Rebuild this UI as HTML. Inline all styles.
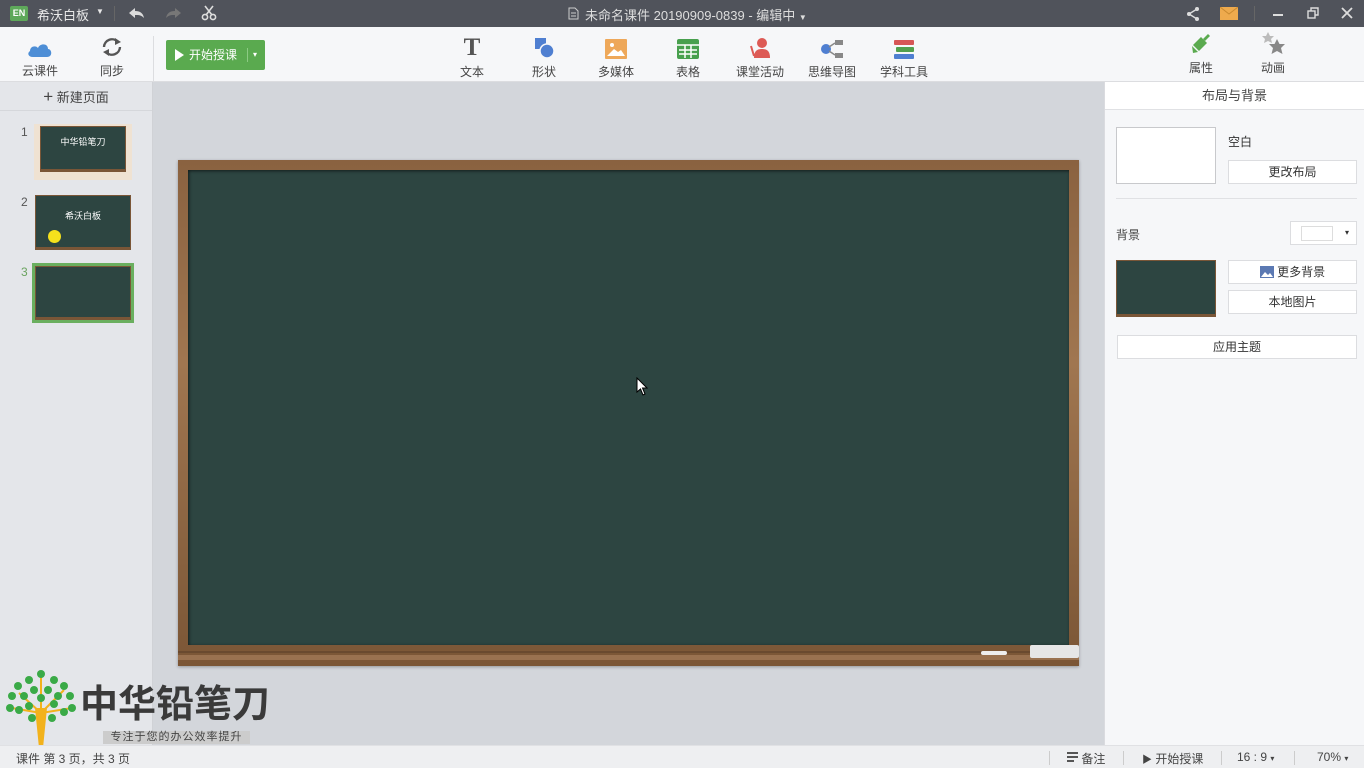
<!DOCTYPE html>
<html><head><meta charset="utf-8"><style>
*{margin:0;padding:0;box-sizing:border-box}
body{width:1364px;height:768px;overflow:hidden;position:relative;font-family:"Liberation Sans","Noto Sans CJK SC",sans-serif;font-size:12px;color:#333;background:#d3d6db}
.abs{position:absolute}
#top{left:0;top:0;width:1364px;height:27px;background:#50535b;color:#e8e8e8}
#tool{left:0;top:27px;width:1364px;height:55px;background:#f6f7f9;border-bottom:1px solid #dcdde0}
.tb{position:absolute;top:36px;width:60px;text-align:center;font-size:12px;color:#444}
.tb .ic{height:22px;margin:0 auto 4px;display:flex;justify-content:center;align-items:flex-end}
#left{left:0;top:82px;width:153px;height:663px;background:#e4e6ea;border-right:1px solid #d0d2d6}
#right{left:1104px;top:82px;width:260px;height:663px;background:#f6f7f9;border-left:1px solid #dadbdf}
.btn{position:absolute;background:#fff;border:1px solid #dcdde0;text-align:center;font-size:12px;color:#333;line-height:22px;height:24px}
#status{left:0;top:745px;width:1364px;height:23px;background:#eeeff1;border-top:1px solid #e0e1e4;font-size:12px;color:#444}
.thumb{position:absolute;background:#2d4541;border:2px solid #7a5637;border-width:1px 1px 3px 1px}
</style></head><body>
<div id="top" class="abs">
  <div class="abs" style="left:10px;top:6px;width:18px;height:15px;background:#5ea85a;color:#fff;font-size:9px;font-weight:bold;line-height:15px;text-align:center;border-radius:2px">EN</div>
  <div class="abs" style="left:37px;top:5px;font-size:13px">希沃白板</div>
  <div class="abs" style="left:96px;top:7px;font-size:8px">▼</div>
  <div class="abs" style="left:114px;top:6px;width:1px;height:15px;background:#666"></div>
  <svg class="abs" style="left:128px;top:6px" width="18" height="14"><path d="M1 7 L7 2 V5 C12 5 15 7 16 12 C13 9 11 9 7 9 V12 Z" fill="#dcdcdc"/></svg>
  <svg class="abs" style="left:164px;top:6px" width="18" height="14"><path d="M17 7 L11 2 V5 C6 5 3 7 2 12 C5 9 7 9 11 9 V12 Z" fill="#777"/></svg>
  <svg class="abs" style="left:201px;top:5px" width="16" height="16"><circle cx="4" cy="12" r="2.6" fill="none" stroke="#ddd" stroke-width="1.6"/><circle cx="12" cy="12" r="2.6" fill="none" stroke="#ddd" stroke-width="1.6"/><path d="M5 10 L12 1 M11 10 L4 1" stroke="#ddd" stroke-width="1.6"/></svg>
  <svg class="abs" style="left:568px;top:7px" width="11" height="13"><path d="M1 1 H7 L10 4 V12 H1 Z M3 6 H8 M3 9 H8" fill="none" stroke="#ccc"/></svg>
  <div class="abs" style="left:585px;top:5px;font-size:13px;color:#ddd">未命名课件 20190909-0839 - 编辑中 <span style="font-size:8px">▼</span></div>
  <svg class="abs" style="left:1185px;top:6px" width="16" height="16"><circle cx="12" cy="3" r="2" fill="#ddd"/><circle cx="4" cy="8" r="2" fill="#ddd"/><circle cx="12" cy="13" r="2" fill="#ddd"/><path d="M12 3 L4 8 L12 13" stroke="#ddd" stroke-width="1.4" fill="none"/></svg>
  <svg class="abs" style="left:1220px;top:7px" width="18" height="13"><rect width="18" height="13" fill="#eeaa4d"/><path d="M0 0 L9 7 L18 0" fill="none" stroke="#c98a30"/></svg>
  <div class="abs" style="left:1254px;top:6px;width:1px;height:15px;background:#666"></div>
  <div class="abs" style="left:1273px;top:14px;width:10px;height:2px;background:#ddd"></div>
  <svg class="abs" style="left:1307px;top:7px" width="13" height="12"><rect x="1" y="4" width="7" height="7" fill="none" stroke="#ddd" stroke-width="1.4"/><path d="M4 4 V1 H11 V8 H8" fill="none" stroke="#ddd" stroke-width="1.4"/></svg>
  <svg class="abs" style="left:1341px;top:7px" width="12" height="12"><path d="M1 1 L11 11 M11 1 L1 11" stroke="#ddd" stroke-width="1.8"/></svg>
</div>
<div id="tool" class="abs"></div>
<div class="tb" style="left:10px;top:36px"><div class="ic"><svg width="26" height="18"><path d="M6 17 C1 17 0 13 3 11 C3 6 9 5 11 8 C13 3 21 3 21 9 C25 9 26 17 20 17 Z" fill="#4d8ed6"/></svg></div>云课件</div>
<div class="tb" style="left:82px;top:36px"><div class="ic"><svg width="24" height="22"><path d="M4 11 A8 8 0 0 1 18 6" fill="none" stroke="#555" stroke-width="2.4"/><path d="M20 11 A8 8 0 0 1 6 16" fill="none" stroke="#555" stroke-width="2.4"/><path d="M15 2 L21 6 L15 9 Z M9 13 L3 16 L9 20 Z" fill="#555"/></svg></div>同步</div>
<div class="abs" style="left:153px;top:36px;width:1px;height:46px;background:#dcdde0"></div>
<div class="abs" style="left:166px;top:40px;width:99px;height:30px;background:#5aaa4f;border-radius:2px;color:#fff;font-size:12px;line-height:30px">
  <span style="position:absolute;left:9px;top:9px;width:0;height:0;border-left:9px solid #fff;border-top:6px solid transparent;border-bottom:6px solid transparent"></span>
  <span style="position:absolute;left:23px">开始授课</span>
  <span style="position:absolute;left:81px;top:8px;width:1px;height:14px;background:#8ccb83"></span>
  <span style="position:absolute;left:87px;top:0;font-size:8px">▾</span>
</div>
<div class="tb" style="left:442px;top:37px"><div class="ic"><span style="font-family:'Liberation Serif',serif;font-weight:bold;font-size:25px;color:#555;line-height:22px">T</span></div>文本</div>
<div class="tb" style="left:514px;top:37px"><div class="ic"><svg width="22" height="22"><rect x="2" y="1" width="11" height="11" fill="#4f7fd1"/><circle cx="14" cy="14" r="7" fill="#4f7fd1" stroke="#f6f7f9" stroke-width="1.5"/></svg></div>形状</div>
<div class="tb" style="left:586px;top:37px"><div class="ic"><svg width="22" height="20"><rect x="0" y="0" width="22" height="20" rx="1" fill="#eea85a"/><circle cx="7" cy="6" r="2" fill="#fff"/><path d="M2 17 L9 10 L13 13 L16 11 L20 17 Z" fill="#fff"/></svg></div>多媒体</div>
<div class="tb" style="left:658px;top:37px"><div class="ic"><svg width="22" height="20"><rect width="22" height="20" rx="2" fill="#48a04e"/><path d="M0 6 H22 M2 11 H20 M2 15 H20 M8 6 V19 M14 6 V19" stroke="#fff" stroke-width="1.5"/></svg></div>表格</div>
<div class="tb" style="left:730px;top:37px"><div class="ic"><svg width="22" height="22"><circle cx="13" cy="6" r="5" fill="#dd5a55"/><path d="M5 21 C5 14 8 12 13 12 C18 12 21 14 21 21 Z" fill="#dd5a55"/><path d="M2 9 L5 19" stroke="#dd5a55" stroke-width="2"/></svg></div>课堂活动</div>
<div class="tb" style="left:802px;top:37px"><div class="ic"><svg width="24" height="20"><circle cx="6" cy="10" r="5" fill="#4f7fd1"/><rect x="15" y="1" width="8" height="5" fill="#888"/><rect x="15" y="14" width="8" height="5" fill="#888"/><path d="M9 8 L15 4 M9 12 L15 16" stroke="#888" stroke-width="1.5"/></svg></div>思维导图</div>
<div class="tb" style="left:874px;top:37px"><div class="ic"><svg width="22" height="20"><rect x="1" y="1" width="20" height="5" rx="1" fill="#d65656"/><rect x="3" y="8" width="18" height="5" rx="1" fill="#52a04e"/><rect x="1" y="15" width="20" height="5" rx="1" fill="#4f7fd1"/></svg></div>学科工具</div>
<div class="tb" style="left:1171px;top:33px"><div class="ic"><svg width="24" height="24"><path d="M4 14 L12 6 L18 12 L10 20 Z" fill="#5aaa4f"/><path d="M14 8 L19 3 L21 5 L16 10 Z" fill="#5aaa4f"/><path d="M3 15 L9 21 L4 22 Z" fill="#5aaa4f"/></svg></div>属性</div>
<div class="tb" style="left:1243px;top:33px"><div class="ic"><svg width="26" height="24"><path d="M8 1 L10 5 L14 5 L11 8 L12 12 L8 10 L4 12 L5 8 L2 5 L6 5 Z" fill="#bbb"/><path d="M17 8 L19.5 13 L25 13 L21 17 L22.5 23 L17 20 L11.5 23 L13 17 L9 13 L14.5 13 Z" fill="#888"/></svg></div>动画</div>

<div id="left" class="abs">
  <div class="abs" style="left:0;top:0;width:152px;height:29px;border-bottom:1px solid #d5d7db;text-align:center;line-height:29px;font-size:13px;color:#444"><b style="font-size:17px;font-weight:normal">+</b> 新建页面</div>
  <div class="abs" style="left:21px;top:43px;color:#555">1</div>
  <div class="abs" style="left:34px;top:42px;width:98px;height:56px;background:#efe2d2"></div>
  <div class="thumb" style="left:40px;top:44px;width:86px;height:46px;color:#fff;font-size:9px;text-align:center;line-height:30px">中华铅笔刀</div>
  <div class="abs" style="left:21px;top:113px;color:#555">2</div>
  <div class="thumb" style="left:35px;top:113px;width:96px;height:55px;color:#fff;font-size:9px;text-align:center;line-height:40px">希沃白板</div>
  <div class="abs" style="left:48px;top:148px;width:13px;height:13px;border-radius:50%;background:#f5e11c"></div>
  <div class="abs" style="left:21px;top:183px;color:#6aa35f">3</div>
  <div class="abs" style="left:32px;top:181px;width:102px;height:60px;background:#6aaf5f"></div>
  <div class="thumb" style="left:35px;top:184px;width:96px;height:54px"></div>
</div>

<!-- chalkboard -->
<div class="abs" style="left:178px;top:160px;width:901px;height:506px;background:linear-gradient(#8a6240,#a07650 40%,#7b5636);box-shadow:0 1px 3px rgba(0,0,0,.3)"></div>
<div class="abs" style="left:188px;top:170px;width:881px;height:475px;background:#2d4541;box-shadow:inset 1px 1px 3px rgba(0,0,0,.6)"></div>
<div class="abs" style="left:178px;top:651px;width:901px;height:2px;background:#6a4a2f"></div>
<div class="abs" style="left:178px;top:655px;width:901px;height:5px;background:#9a7250"></div>
<div class="abs" style="left:1030px;top:645px;width:49px;height:13px;background:#e6e6e6;border-radius:2px"></div>
<div class="abs" style="left:981px;top:651px;width:26px;height:4px;background:#eee;border-radius:2px"></div>
<svg class="abs" style="left:636px;top:377px" width="12" height="19"><path d="M1 1 V15 L4.5 12 L7 18 L9 17 L6.5 11 L11 11 Z" fill="#fff" stroke="#000"/></svg>

<div id="right" class="abs">
  <div class="abs" style="left:0;top:0;width:259px;height:28px;background:#fff;border-bottom:1px solid #e0e1e4;text-align:center;line-height:28px;font-size:13px;color:#444">布局与背景</div>
  <div class="abs" style="left:11px;top:45px;width:100px;height:57px;background:#fff;border:1px solid #c8c9cc"></div>
  <div class="abs" style="left:123px;top:51px;font-size:12px">空白</div>
  <div class="btn" style="left:123px;top:78px;width:129px">更改布局</div>
  <div class="abs" style="left:11px;top:116px;width:241px;height:1px;background:#e0e1e4"></div>
  <div class="abs" style="left:11px;top:144px;font-size:12px;color:#444">背景</div>
  <div class="btn" style="left:185px;top:139px;width:67px;height:24px"><span style="position:absolute;left:10px;top:4px;width:32px;height:15px;border:1px solid #ddd"></span><span style="position:absolute;right:7px;top:0;font-size:8px">▾</span></div>
  <div class="abs" style="left:11px;top:178px;width:100px;height:57px;background:#2d4541;border:1px solid #7a5637;border-bottom-width:3px"></div>
  <div class="btn" style="left:123px;top:178px;width:129px"><svg style="vertical-align:-2px" width="14" height="12"><rect width="14" height="12" fill="#5b79b3"/><path d="M1 11 L5 6 L8 9 L10 7 L13 11 Z" fill="#fff"/></svg> 更多背景</div>
  <div class="btn" style="left:123px;top:208px;width:129px">本地图片</div>
  <div class="btn" style="left:12px;top:253px;width:240px">应用主题</div>
</div>

<!-- watermark -->
<svg class="abs" style="left:4px;top:668px" width="76" height="84">
  <path d="M35 80 L31 40 H43 L39 80 Z" fill="#f2b21c"/>
  <path d="M37 45 L15 25 M37 45 L60 22 M37 42 L37 8 M37 45 L8 40 M37 45 L68 40" stroke="#f2b21c" stroke-width="2"/>
  <g fill="#3aaa47">
    <circle cx="37" cy="6" r="4"/><circle cx="25" cy="12" r="4"/><circle cx="50" cy="12" r="4"/><circle cx="14" cy="18" r="4"/><circle cx="60" cy="18" r="4"/><circle cx="8" cy="28" r="4"/><circle cx="66" cy="28" r="4"/><circle cx="20" cy="28" r="4"/><circle cx="54" cy="28" r="4"/><circle cx="6" cy="40" r="4"/><circle cx="68" cy="40" r="4"/><circle cx="30" cy="22" r="4"/><circle cx="44" cy="22" r="4"/><circle cx="15" cy="42" r="4"/><circle cx="60" cy="44" r="4"/><circle cx="25" cy="38" r="4"/><circle cx="50" cy="36" r="4"/><circle cx="37" cy="30" r="4"/><circle cx="28" cy="50" r="4"/><circle cx="48" cy="50" r="4"/>
  </g>
</svg>
<div class="abs" style="left:80px;top:683px;font-size:38px;font-weight:bold;color:#3a3a3a;line-height:44px">中华铅笔刀</div>
<div class="abs" style="left:103px;top:731px;width:147px;height:13px;background:#ccc;font-size:11px;color:#444;line-height:13px;letter-spacing:1px;text-align:center">专注于您的办公效率提升</div>

<div id="status" class="abs">
  <div class="abs" style="left:16px;top:4px">课件 第 3 页，共 3 页</div>
  <div class="abs" style="left:1049px;top:5px;width:1px;height:14px;background:#ccc"></div>
  <div class="abs" style="left:1067px;top:4px"><span style="display:inline-block;width:11px;vertical-align:1px"><span style="display:block;height:2px;background:#555;margin-bottom:2px"></span><span style="display:block;height:2px;background:#555;margin-bottom:2px"></span><span style="display:block;height:2px;width:7px;background:#555"></span></span> 备注</div>
  <div class="abs" style="left:1123px;top:5px;width:1px;height:14px;background:#ccc"></div>
  <div class="abs" style="left:1142px;top:4px"><span style="font-size:10px">▶</span> 开始授课</div>
  <div class="abs" style="left:1221px;top:5px;width:1px;height:14px;background:#ccc"></div>
  <div class="abs" style="left:1237px;top:4px">16 : 9 <span style="font-size:8px">▾</span></div>
  <div class="abs" style="left:1294px;top:5px;width:1px;height:14px;background:#ccc"></div>
  <div class="abs" style="left:1317px;top:4px">70% <span style="font-size:8px">▾</span></div>
</div>
</body></html>
